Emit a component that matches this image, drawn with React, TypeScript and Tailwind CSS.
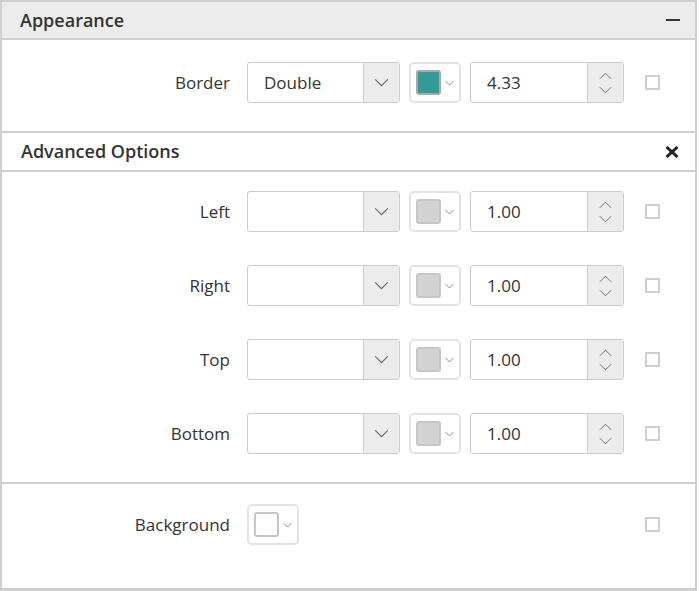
import React from 'react';

const font = { fontFamily: '"Open Sans", "Noto Sans", sans-serif' };

function Chevron({ className = '' }: { className?: string }) {
  return (
    <svg viewBox="0 0 16 10" className={className} fill="none" stroke="currentColor" strokeWidth={1.2}>
      <path d="M1 1.5l7 7 7-7" />
    </svg>
  );
}

function Dropdown({ value }: { value: string }) {
  return (
    <div className="flex h-[41px] w-[153px] rounded-[3px] border border-[#cccccc] bg-white overflow-hidden">
      <div className="flex-1 flex items-center pl-4 text-[17px] text-[#333]">{value}</div>
      <div className="w-[36px] flex items-center justify-center bg-[#ececec] border-l border-[#cccccc] text-[#666]">
        <Chevron className="w-[15px] h-[9px]" />
      </div>
    </div>
  );
}

function ColorPick({ color, border }: { color: string; border: string }) {
  return (
    <div className="flex h-[41px] w-[52px] items-center gap-[4px] rounded-[5px] border-2 border-[#e3e3e3] bg-white pl-[5px]">
      <div className={`h-[25px] w-[25px] rounded-[3px] border-2 ${border} ${color}`} />
      <Chevron className="w-[9px] h-[6px] text-[#555]" />
    </div>
  );
}

function Numeric({ value }: { value: string }) {
  return (
    <div className="flex h-[41px] w-[154px] rounded-[3px] border border-[#cccccc] bg-white overflow-hidden">
      <div className="flex-1 flex items-center pl-4 text-[17px] text-[#333]">{value}</div>
      <div className="w-[36px] flex flex-col items-center justify-center gap-[6px] bg-[#ececec] border-l border-[#cccccc] text-[#707070]">
        <Chevron className="w-[13px] h-[8px] rotate-180" />
        <Chevron className="w-[13px] h-[8px]" />
      </div>
    </div>
  );
}

function CheckBox() {
  return <div className="h-[15px] w-[15px] border-2 border-[#cfcfcf] bg-white" />;
}

function Label({ text }: { text: string }) {
  return <div className="w-[228px] shrink-0 text-right text-[17px] text-[#333]">{text}</div>;
}

function BorderRow({ label, value, num, swatch, swatchBorder }: { label: string; value: string; num: string; swatch: string; swatchBorder: string }) {
  return (
    <div className="flex items-center h-[41px]">
      <Label text={label} />
      <div className="ml-[17px]"><Dropdown value={value} /></div>
      <div className="ml-[9px]"><ColorPick color={swatch} border={swatchBorder} /></div>
      <div className="ml-[9px]"><Numeric value={num} /></div>
      <div className="ml-[21px]"><CheckBox /></div>
    </div>
  );
}

export default function App() {
  const sides = ['Left', 'Right', 'Top', 'Bottom'];
  return (
    <div className="w-[699px] h-[591px] bg-white" style={font}>
      <div className="w-[697px] h-[591px] border-2 border-b-[3px] border-[#cfcfcf] flex flex-col">
        {/* Appearance */}
        <div className="h-[38px] shrink-0 bg-[#ececec] border-b-2 border-[#d0d0d0] flex items-center justify-between pl-[18px] pr-[14px]">
          <span className="text-[18px] font-semibold text-[#333]">Appearance</span>
          <div className="w-[14px] h-[2px] bg-[#333] mr-[1px]" />
        </div>
        <div className="h-[93px] shrink-0 pt-[22px] border-b-2 border-[#d0d0d0]">
          <BorderRow label="Border" value="Double" num="4.33" swatch="bg-[#339b97]" swatchBorder="border-[#a9a9a9]" />
        </div>

        {/* Advanced Options */}
        <div className="h-[39px] shrink-0 border-b-2 border-[#d0d0d0] flex items-center justify-between pl-[19px] pr-[16px]">
          <span className="text-[18px] font-semibold text-[#333]">Advanced Options</span>
          <svg viewBox="0 0 14 12" className="w-[14px] h-[12px]" fill="none" stroke="#222" strokeWidth={3}>
            <path d="M1.5 1l11 10M12.5 1l-11 10" />
          </svg>
        </div>
        <div className="h-[312px] shrink-0 pt-[19px] border-b-2 border-[#d0d0d0] flex flex-col gap-[33px]">
          {sides.map((s) => (
            <BorderRow key={s} label={s} value="" num="1.00" swatch="bg-[#d3d3d3]" swatchBorder="border-[#c6c6c6]" />
          ))}
        </div>

        {/* Background */}
        <div className="flex-1 pt-[20px]">
          <div className="flex items-center h-[41px]">
            <Label text="Background" />
            <div className="ml-[17px]"><ColorPick color="bg-white" border="border-[#c6c6c6]" /></div>
            <div className="ml-[346px]"><CheckBox /></div>
          </div>
        </div>
      </div>
    </div>
  );
}
